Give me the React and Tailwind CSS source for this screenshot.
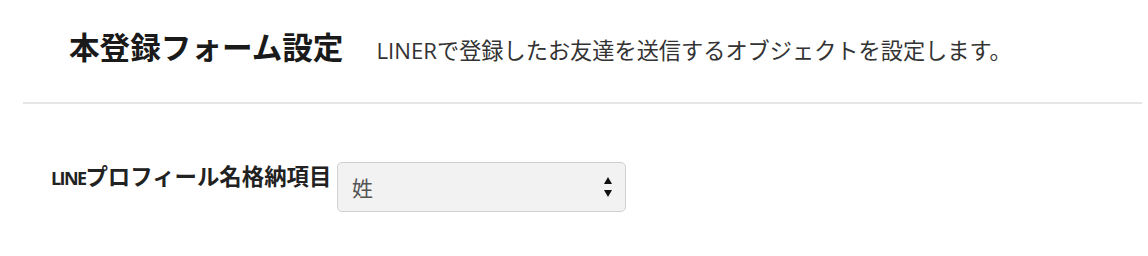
export default function App() {
  const font = { fontFamily: '"Open Sans", "Noto Sans CJK JP", sans-serif' };
  return (
    <div className="w-full h-[256px] bg-white text-[#222]" style={font}>
      <div className="flex items-baseline pl-[69px] pt-[27px] h-[102px]">
        <h1 className="text-[30.6px] font-bold leading-[40px] text-[#1a1a1a] whitespace-nowrap">本登録フォーム設定</h1>
        <p className="ml-[33px] text-[22.2px] leading-[30px] text-[#333] whitespace-nowrap">LINERで登録したお友達を送信するオブジェクトを設定します。</p>
      </div>
      <div className="ml-[23px] mr-[6px] h-[2px] bg-[#e6e6e6]"></div>
      <div className="flex items-start pl-[51px] pt-[58px]">
        <label className="w-[286px] text-[22.4px] font-bold leading-[32px] -mt-[1px] text-[#222] whitespace-nowrap">
          <span className="text-[18px] tracking-[-1.6px]">LINE</span>プロフィール名格納項目
        </label>
        <div className="relative w-[289px] h-[50px]">
          <select className="appearance-none w-full h-full rounded-[5px] border border-[#d0d0d0] bg-[#f2f2f2] pl-[14px] pt-[4px] text-[21px] text-[#555] outline-none" style={font} defaultValue="姓">
            <option>姓</option>
            <option>名</option>
          </select>
          <svg className="absolute right-[14px] top-[15px] pointer-events-none" width="8" height="20" viewBox="0 0 8 20">
            <path d="M4 0 L8 7 L0 7 Z" fill="#111" />
            <path d="M0 13 L8 13 L4 20 Z" fill="#111" />
          </svg>
        </div>
      </div>
    </div>
  );
}
